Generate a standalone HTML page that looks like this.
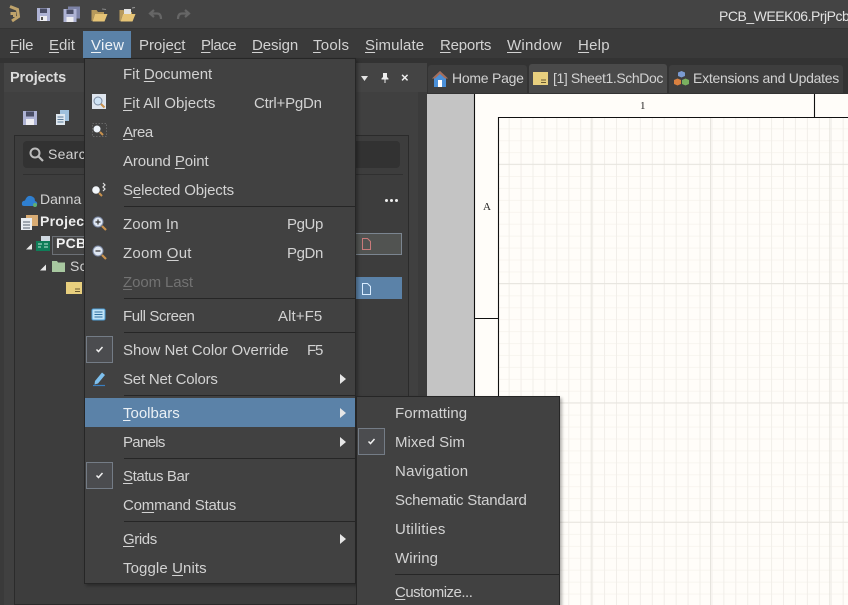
<!DOCTYPE html>
<html><head><meta charset="utf-8"><style>
html,body{margin:0;padding:0;background:#3c3c3c}
#r{position:relative;width:848px;height:605px;overflow:hidden;background:#3c3c3c;font-family:"Liberation Sans",sans-serif;font-size:15px;color:#d2d2d2}
.a{position:absolute}
.t{position:absolute;line-height:20px;white-space:nowrap;letter-spacing:.25px;margin-top:1px}
u{text-underline-offset:2px;text-decoration-thickness:1px}
.sep{position:absolute;height:1px;background:#262626}
.chk{position:absolute;width:27px;height:27px;box-sizing:border-box;border:1px solid #747c86;background:#4b4c4f}
.arr{position:absolute;width:0;height:0;border-left:6px solid #e6e6e6;border-top:5px solid transparent;border-bottom:5px solid transparent}
svg{position:absolute;overflow:visible}
</style></head><body><div id="r">
<!-- title bar -->
<div class="a" style="left:0;top:0;width:848px;height:28px;background:#444"></div>
<div class="a" style="left:0;top:28px;width:848px;height:1px;background:#353535"></div>
<div class="a" style="left:0;top:29px;width:848px;height:29px;background:#3a3a3a"></div>
<div class="a" style="left:0;top:58px;width:848px;height:5px;background:#333"></div>
<div class="a" style="left:0;top:63px;width:4px;height:542px;background:#3a3a3a"></div>
<svg style="left:7px;top:4px" width="14" height="20" viewBox="0 0 14 20"><path d="M3 2.500 L10.500 5.500 L11.500 12.500 L5 17 M3.500 9.500 H7.500 V13" fill="none" stroke="#bfa36b" stroke-width="3"/></svg>
<svg style="left:36px;top:7px" width="15" height="15" viewBox="0 0 15 15"><rect x="1" y="1" width="13" height="13" fill="#aeb3d4"/><rect x="4" y="1.500" width="7" height="4.500" fill="#4a4e66"/><rect x="4" y="9" width="7" height="5" fill="#eeeef2"/><rect x="5" y="10" width="2" height="3" fill="#555"/></svg>
<svg style="left:63px;top:6px" width="17" height="16" viewBox="0 0 17 16"><rect x="5" y="0.500" width="12" height="12" fill="#7c82a6"/><rect x="0.500" y="3" width="13" height="13" fill="#aeb3d4"/><rect x="3.500" y="3.500" width="7" height="4.500" fill="#4a4e66"/><rect x="3.500" y="11" width="7" height="5" fill="#eeeef2"/></svg>
<svg style="left:91px;top:8px" width="17" height="14" viewBox="0 0 17 14"><path d="M0.500 2h5l1.500 2h6v2H4L1.500 13H.5z" fill="#b79a5c"/><path d="M4 6h12.500l-3 7.500H1.500z" fill="#e6c476"/><path d="M11 1l4 .5" stroke="#888" fill="none"/></svg>
<svg style="left:119px;top:6px" width="17" height="16" viewBox="0 0 17 16"><path d="M0.500 4h4l1.500 2h7v2H4L1.500 15H.5z" fill="#b79a5c"/><rect x="5" y="3" width="7" height="6" fill="#e4e4e4"/><path d="M4 8h12.500l-3 7.500H1.500z" fill="#e6c476"/><path d="M13 2l3-.5" stroke="#999"/></svg>
<svg style="left:148px;top:8px" width="15" height="13" viewBox="0 0 15 13"><path d="M6 2 L2 5.500 L6 9 M2.500 5.500 H9 Q13 5.500 13 11" stroke="#666" stroke-width="2.200" fill="none"/></svg>
<svg style="left:176px;top:8px" width="15" height="13" viewBox="0 0 15 13"><path d="M9 2 L13 5.500 L9 9 M12.500 5.500 H6 Q2 5.500 2 11" stroke="#666" stroke-width="2.200" fill="none"/></svg>
<div class="t" style="top:5px;left:719px;font-size:14px;letter-spacing:-.48px;color:#e2e2e2">PCB_WEEK06.PrjPcb</div>
<!-- menu bar -->
<div class="a" style="left:83px;top:31px;width:48px;height:27px;background:#5b82a8"></div>
<div class="t" style="left:10px;top:35px;letter-spacing:-.25px"><u>F</u>ile</div>
<div class="t" style="left:49px;top:35px;letter-spacing:0"><u>E</u>dit</div>
<div class="t" style="left:91px;top:35px;color:#eef2f6"><u>V</u>iew</div>
<div class="t" style="left:139px;top:35px;letter-spacing:-.05px">Proje<u>c</u>t</div>
<div class="t" style="left:201px;top:35px;letter-spacing:-.5px"><u>P</u>lace</div>
<div class="t" style="left:252px;top:35px;letter-spacing:-.1px"><u>D</u>esign</div>
<div class="t" style="left:313px;top:35px"><u>T</u>ools</div>
<div class="t" style="left:365px;top:35px;letter-spacing:.1px"><u>S</u>imulate</div>
<div class="t" style="left:440px;top:35px;letter-spacing:-.2px"><u>R</u>eports</div>
<div class="t" style="left:507px;top:35px"><u>W</u>indow</div>
<div class="t" style="left:578px;top:35px"><u>H</u>elp</div>
<!-- left panel -->
<div class="a" style="left:4px;top:63px;width:423px;height:29px;background:#444"></div>
<div class="a" style="left:4px;top:92px;width:414px;height:513px;background:#404040"></div>
<div class="a" style="left:418px;top:92px;width:9px;height:513px;background:#3b3b3b"></div>
<div class="a" style="left:14px;top:135px;width:395px;height:470px;box-sizing:border-box;border:1px solid #2b2b2b;background:#3d3d3d"></div>
<div class="t" style="left:10px;top:67px;font-weight:bold;font-size:14.500px;letter-spacing:-.15px;color:#dcdcdc">Projects</div>
<svg style="left:23px;top:111px" width="14" height="14" viewBox="0 0 14 14"><rect x="0" y="0" width="14" height="14" fill="#aeb3d4"/><rect x="3" y=".5" width="8" height="5" fill="#4a4e66"/><rect x="3" y="8" width="8" height="6" fill="#eeeef2"/></svg>
<svg style="left:55px;top:110px" width="14" height="15" viewBox="0 0 14 15"><rect x="5" y="0" width="9" height="11" fill="#9fc0dc"/><rect x="1" y="4" width="9" height="11" fill="#dfe8f0"/><path d="M2.500 7h6M2.500 9.500h6M2.500 12h6" stroke="#5a7a98"/></svg>
<div class="a" style="left:23px;top:141px;width:377px;height:27px;border-radius:4px;background:#323232"></div>
<svg style="left:29px;top:147px" width="15" height="15" viewBox="0 0 15 15"><circle cx="6" cy="6" r="4.500" stroke="#bdbdbd" stroke-width="2" fill="none"/><path d="M9.500 9.500L14 14" stroke="#bdbdbd" stroke-width="2.200"/></svg>
<div class="t" style="left:48px;top:143px;font-size:14px">Search</div>
<div class="a" style="left:23px;top:174px;width:380px;height:1px;background:#303030"></div>
<svg style="left:21px;top:194px" width="17" height="13" viewBox="0 0 17 13"><path d="M1 11 Q0 7 4 6.500 Q6 1 10 2 Q14 3 14 7 Q17 8 16 11 Q16 12 14 12 H3 Q1.500 12 1 11Z" fill="#2f7fd0"/><circle cx="14" cy="11" r="2" fill="#5fae72"/></svg>
<div class="t" style="left:40px;top:188px;font-size:14px;letter-spacing:0">Danna</div>
<svg style="left:21px;top:214px" width="17" height="16" viewBox="0 0 17 16"><rect x="5" y="1" width="12" height="11" fill="#d8ac74"/><rect x="0" y="4" width="11" height="12" fill="#e8edf2"/><path d="M2 8h7M2 11h7M2 14h7" stroke="#55606c"/></svg>
<div class="t" style="left:40px;top:210px;font-weight:bold;font-size:14px;color:#ececec">Project</div>
<svg style="left:26px;top:243px" width="7" height="7"><path d="M0 6.500 L6 6.500 L6 .5Z" fill="#e8e8e8"/></svg>
<svg style="left:36px;top:236px" width="16" height="16" viewBox="0 0 16 16"><rect x="5" y="0" width="9" height="8" fill="#cfd8e0"/><rect x="0" y="5" width="14" height="10" fill="#0f7d58"/><path d="M2 8h4M2 11h3M8 8h4M8 11h4" stroke="#bfe8d8"/></svg>
<div class="a" style="left:52px;top:236px;width:40px;height:19px;box-sizing:border-box;border:1px solid #6c7076;background:#444"></div>
<div class="t" style="left:56px;top:232px;font-weight:bold;font-size:14px;color:#f2f2f2">PCB_</div>
<svg style="left:40px;top:264px" width="7" height="7"><path d="M0 6.500 L6 6.500 L6 .5Z" fill="#e8e8e8"/></svg>
<svg style="left:52px;top:260px" width="14" height="12" viewBox="0 0 14 12"><path d="M0 1h5l1 1.500h7V12H0z" fill="#a8c8a0"/></svg>
<div class="t" style="left:70px;top:255px;font-size:14px">Sc</div>
<svg style="left:66px;top:282px" width="16" height="12" viewBox="0 0 16 12"><rect width="16" height="12" fill="#e8cf7e"/><path d="M9 7h5M9 9.500h5" stroke="#6a5a30"/></svg>
<!-- right of menu: panel header controls -->
<svg style="left:361px;top:76px" width="7" height="5"><path d="M0 0H7L3.500 5Z" fill="#e4e4e4"/></svg>
<svg style="left:381px;top:73px" width="8" height="10" viewBox="0 0 8 10"><path d="M2 0h4v4l1.500 1.500v1H4.500V10h-1V6.500H.5v-1L2 4z" fill="#eee"/></svg>
<div class="t" style="left:401px;top:67px;font-size:13px;font-weight:bold;color:#eee">×</div>
<div class="a" style="left:385px;top:199px;width:3px;height:3px;border-radius:50%;background:#eee;box-shadow:5px 0 #eee,10px 0 #eee"></div>
<div class="a" style="left:350px;top:233px;width:52px;height:22px;box-sizing:border-box;border:1px solid #7b8590;background:#515351"></div>
<svg style="left:362px;top:238px" width="9" height="12"><path d="M.5 .5H5.500L8.500 3.500V11.500H.5Z" fill="none" stroke="#c97a7a"/></svg>
<div class="a" style="left:350px;top:277px;width:52px;height:22px;background:#5b82a8"></div>
<svg style="left:362px;top:283px" width="9" height="12"><path d="M.5 .5H5.500L8.500 3.500V11.500H.5Z" fill="#5b82a8" stroke="#d8ecff"/></svg>
<!-- tabs -->
<div class="a" style="left:427px;top:63px;width:421px;height:31px;background:#333"></div>
<div class="a" style="left:428px;top:65px;width:99px;height:28px;background:#3e3e3e;border-radius:3px 3px 0 0"></div>
<div class="a" style="left:529px;top:64px;width:138px;height:29px;background:#4a4a4a;border-radius:3px 3px 0 0"></div>
<div class="a" style="left:669px;top:65px;width:174px;height:28px;background:#3e3e3e;border-radius:3px 3px 0 0"></div>
<svg style="left:432px;top:70px" width="16" height="17" viewBox="0 0 16 17"><path d="M8 1L16 8.500H14V17H2V8.500H0Z" fill="#4a90d9"/><path d="M8 1L16 8.500H13L8 4L3 8.500H0Z" fill="#c7632e" opacity=".75"/><rect x="6" y="10" width="4" height="7" fill="#fff"/></svg>
<div class="t" style="left:452px;top:67px;font-size:14px;letter-spacing:-.25px">Home Page</div>
<svg style="left:533px;top:72px" width="15" height="13" viewBox="0 0 15 13"><rect width="15" height="13" fill="#e8cf7e"/><path d="M8 8h5M8 10.500h5" stroke="#6a5a30"/></svg>
<div class="t" style="left:553px;top:67px;font-size:14px;letter-spacing:-.4px">[1] Sheet1.SchDoc</div>
<svg style="left:673px;top:70px" width="17" height="17" viewBox="0 0 17 17"><path d="M5 1L8.500 2.500V6L5 7.500 1.500 6V2.500Z" transform="translate(3.500 0)" fill="#7a9ad0"/><path d="M1 10L4.500 8.500 8 10V14L4.500 15.500 1 14Z" fill="#d98040"/><path d="M9 10L12.500 8.500 16 10V14L12.500 15.500 9 14Z" fill="#7ab060"/></svg>
<div class="t" style="left:693px;top:67px;font-size:14px;letter-spacing:-.26px">Extensions and Updates</div>
<!-- sheet -->
<div class="a" style="left:427px;top:94px;width:421px;height:511px;background:#c4c4c4"></div>
<div class="a" style="left:474px;top:94px;width:374px;height:511px;background:#fffdf9"></div>
<svg style="left:0;top:0" width="848" height="605">
<defs><pattern id="mi" x="496.700" y="128.300" width="11.930" height="11.930" patternUnits="userSpaceOnUse"><path d="M0 .5H11.930" stroke="#f8f5ef" stroke-width="1" fill="none"/><path d="M.5 0V11.930" stroke="#f1eee9" stroke-width="1" fill="none"/></pattern>
<pattern id="ma" x="590.700" y="44.500" width="119.300" height="119.300" patternUnits="userSpaceOnUse"><path d="M.5 0V119.300M0 .5H119.300" stroke="#e6e4de" stroke-width="1" fill="none"/></pattern></defs>
<rect x="499" y="118" width="349" height="487" fill="url(#mi)"/>
<rect x="499" y="118" width="349" height="487" fill="url(#ma)"/>
<path d="M474.500 94V605M498.500 117V605M498 117.500H848M814.500 94V117M474 318.500H498" stroke="#111" stroke-width="1.100" fill="none"/>
<text x="640" y="109" font-family="Liberation Serif,serif" font-size="11" fill="#222">1</text>
<text x="483" y="210" font-family="Liberation Serif,serif" font-size="11" fill="#222">A</text>
</svg>
<!-- View menu -->
<div class="a" style="left:84px;top:58px;width:272px;height:526px;box-sizing:border-box;border:1px solid #262626;background:#414141;box-shadow:2px 2px 3px rgba(0,0,0,.3)"></div>
<div class="t" style="left:123px;top:64px;letter-spacing:0">Fit <u>D</u>ocument</div>
<div class="t" style="left:123px;top:93px;letter-spacing:.05px"><u>F</u>it All Objects</div><div class="t" style="left:254px;top:93px;letter-spacing:-.2px">Ctrl+PgDn</div>
<div class="t" style="left:123px;top:122px;letter-spacing:-.5px"><u>A</u>rea</div>
<div class="t" style="left:123px;top:151px;letter-spacing:-.1px">Around <u>P</u>oint</div>
<div class="t" style="left:123px;top:180px;letter-spacing:-.15px">S<u>e</u>lected Objects</div>
<div class="sep" style="left:124px;top:206px;width:232px"></div>
<div class="t" style="left:123px;top:214px;letter-spacing:.1px">Zoom <u>I</u>n</div><div class="t" style="left:287px;top:214px;letter-spacing:-.4px">PgUp</div>
<div class="t" style="left:123px;top:243px">Zoom <u>O</u>ut</div><div class="t" style="left:287px;top:243px;letter-spacing:-.4px">PgDn</div>
<div class="t" style="left:123px;top:272px;letter-spacing:-.1px;color:#727272"><u>Z</u>oom Last</div>
<div class="sep" style="left:124px;top:298px;width:232px"></div>
<div class="t" style="left:123px;top:306px;letter-spacing:-.4px">Full Screen</div><div class="t" style="left:278px;top:306px;letter-spacing:.1px">Alt+F5</div>
<div class="sep" style="left:124px;top:332px;width:232px"></div>
<div class="chk" style="left:86px;top:336px"></div>
<div class="t" style="left:123px;top:340px;letter-spacing:-.05px">Show Net Color Override</div><div class="t" style="left:307px;top:340px;letter-spacing:-1.200px">F5</div>
<div class="t" style="left:123px;top:369px;letter-spacing:-.2px">Set Net Colors</div><div class="arr" style="left:340px;top:374px"></div>
<div class="sep" style="left:124px;top:395px;width:232px"></div>
<div class="a" style="left:85px;top:398px;width:270px;height:29px;background:#5b82a8"></div>
<div class="t" style="left:123px;top:403px;letter-spacing:0;color:#eaf0f5"><u>T</u>oolbars</div><div class="arr" style="left:340px;top:408px"></div>
<div class="t" style="left:123px;top:432px;letter-spacing:-.7px">Panels</div><div class="arr" style="left:340px;top:437px"></div>
<div class="sep" style="left:124px;top:458px;width:232px"></div>
<div class="chk" style="left:86px;top:462px"></div>
<div class="t" style="left:123px;top:466px;letter-spacing:-.4px"><u>S</u>tatus Bar</div>
<div class="t" style="left:123px;top:495px;letter-spacing:-.2px">Co<u>m</u>mand Status</div>
<div class="sep" style="left:124px;top:521px;width:232px"></div>
<div class="t" style="left:123px;top:529px;letter-spacing:-.4px"><u>G</u>rids</div><div class="arr" style="left:340px;top:534px"></div>
<div class="t" style="left:123px;top:558px;letter-spacing:.1px">Toggle <u>U</u>nits</div>
<svg style="left:0;top:0" width="848" height="605">
<g fill="none" stroke="#f0f0f0" stroke-width="1.500"><path d="M96.500 349.500l2 2 4-4.500"/><path d="M96.500 475.500l2 2 4-4.500"/></g>
<!-- Fit all -->
<rect x="92" y="94" width="14" height="15" fill="#dfe6ef"/><circle cx="98" cy="101" r="4" fill="#cfe4f6" stroke="#7a8aa0"/><path d="M101 104l3.500 3.500" stroke="#c9924e" stroke-width="2"/>
<!-- Area -->
<rect x="92.500" y="123.500" width="14" height="13" fill="none" stroke="#666" stroke-dasharray="1.500 1.500"/><circle cx="97" cy="129" r="3.500" fill="#eef4fa"/><path d="M100 132l3 3" stroke="#c9924e" stroke-width="2"/>
<!-- Selected -->
<circle cx="96" cy="190" r="3.800" fill="#f2f6fa"/><path d="M99 193l3 3" stroke="#c9924e" stroke-width="2"/><path d="M103 183l2 2-2 2 2 2-2 2" stroke="#e0e0e0" stroke-width="1.200" fill="none"/>
<!-- Zoom in/out -->
<circle cx="98" cy="222" r="5" fill="#dfe7f2" stroke="#7d8aa5"/><path d="M95.500 222h5M98 219.500v5" stroke="#333" stroke-width="1.200"/><path d="M102 226l4 4" stroke="#c9924e" stroke-width="2.200"/>
<circle cx="98" cy="251" r="5" fill="#dfe7f2" stroke="#7d8aa5"/><path d="M95.500 251h5" stroke="#333" stroke-width="1.200"/><path d="M102 255l4 4" stroke="#c9924e" stroke-width="2.200"/>
<!-- Full screen -->
<rect x="92" y="309" width="13" height="11" rx="1.500" fill="#bfe2f6" stroke="#4d9fd8"/><path d="M94.500 312h8M94.500 314.500h8M94.500 317h8" stroke="#2f6f9f"/>
<!-- Set Net -->
<path d="M95 381l7-8.500 3 2.500-7 8.500-3.500 1z" fill="#7ec0ee"/><path d="M93 385.500h12" stroke="#3a7fc0" stroke-width="1.200"/>
</svg>
<!-- Submenu -->
<div class="a" style="left:356px;top:396px;width:204px;height:215px;box-sizing:border-box;border:1px solid #262626;background:#414141;box-shadow:2px 2px 3px rgba(0,0,0,.3)"></div>
<div class="chk" style="left:358px;top:428px"></div>
<svg style="left:0;top:0" width="848" height="605"><path d="M368.500 441.500l2 2 4-4.500" fill="none" stroke="#f0f0f0" stroke-width="1.500"/></svg>
<div class="t" style="left:395px;top:403px;letter-spacing:.05px">Formatting</div>
<div class="t" style="left:395px;top:432px;letter-spacing:0">Mixed Sim</div>
<div class="t" style="left:395px;top:461px">Navigation</div>
<div class="t" style="left:395px;top:490px;letter-spacing:-.19px">Schematic Standard</div>
<div class="t" style="left:395px;top:519px">Utilities</div>
<div class="t" style="left:395px;top:548px;letter-spacing:.1px">Wiring</div>
<div class="sep" style="left:395px;top:574px;width:164px"></div>
<div class="t" style="left:395px;top:582px;letter-spacing:-.5px"><u>C</u>ustomize...</div>
</div></body></html>
